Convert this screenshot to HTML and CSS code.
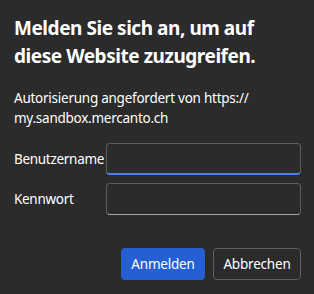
FILE: index.html
```html
<!DOCTYPE html>
<html lang="de">
<head>
<meta charset="utf-8">
<link rel="stylesheet" href="styles.css">
</head>
<body>
<div class="dialog">
  <h1 class="title">Melden Sie sich an, um auf<br>diese Website zuzugreifen.</h1>
  <p class="desc">Autorisierung angefordert von https://<br>my.sandbox.mercanto.ch</p>
  <div class="form">
    <label class="label" for="u">Benutzername</label>
    <input class="input focused" id="u" type="text">
    <label class="label" for="p">Kennwort</label>
    <input class="input" id="p" type="password">
  </div>
  <div class="actions">
    <button class="btn primary">Anmelden</button>
    <button class="btn secondary">Abbrechen</button>
  </div>
</div>
</body>
</html>
```
FILE: styles.css
```css
html, body {
  margin: 0;
  padding: 0;
  background: #2b2b2b;
}
.dialog {
  width: 314px;
  height: 294px;
  box-sizing: border-box;
  padding: 14px 13px 14px 14px;
  font-family: "Noto Sans", "Open Sans", sans-serif;
  color: #ffffff;
  display: flex;
  flex-direction: column;
}
.title {
  margin: 0;
  font-size: 19px;
  line-height: 28px;
  font-weight: 700;
  letter-spacing: -0.45px;
}
.desc {
  margin: 18px 0 0 0;
  font-size: 13.5px;
  line-height: 20px;
  letter-spacing: -0.25px;
}
.form {
  margin-top: 15px;
  display: grid;
  grid-template-columns: 92px 1fr;
  row-gap: 8px;
  align-items: center;
}
.label {
  font-size: 13.5px;
  letter-spacing: -0.3px;
}
.input {
  box-sizing: border-box;
  height: 32px;
  width: 100%;
  margin: 0;
  background: #2b2b2b;
  border: 1px solid #5c5c5c;
  border-bottom-color: #a8a8a8;
  border-radius: 4px;
  outline: none;
  color: #fff;
}
.input.focused {
  border-bottom: 2px solid #4a80e8;
}
.actions {
  margin-top: auto;
  display: flex;
  justify-content: flex-end;
  gap: 8px;
}
.btn {
  height: 32px;
  box-sizing: border-box;
  border-radius: 4px;
  font-family: inherit;
  font-size: 13.5px;
  letter-spacing: -0.2px;
  color: #fff;
  padding: 0 8px;
  margin: 0;
}
.primary {
  background: #2460d3;
  border: 1px solid #2460d3;
  width: 84px;
}
.secondary {
  background: #2b2b2b;
  border: 1px solid #5e5e5e;
  width: 88px;
}
```
